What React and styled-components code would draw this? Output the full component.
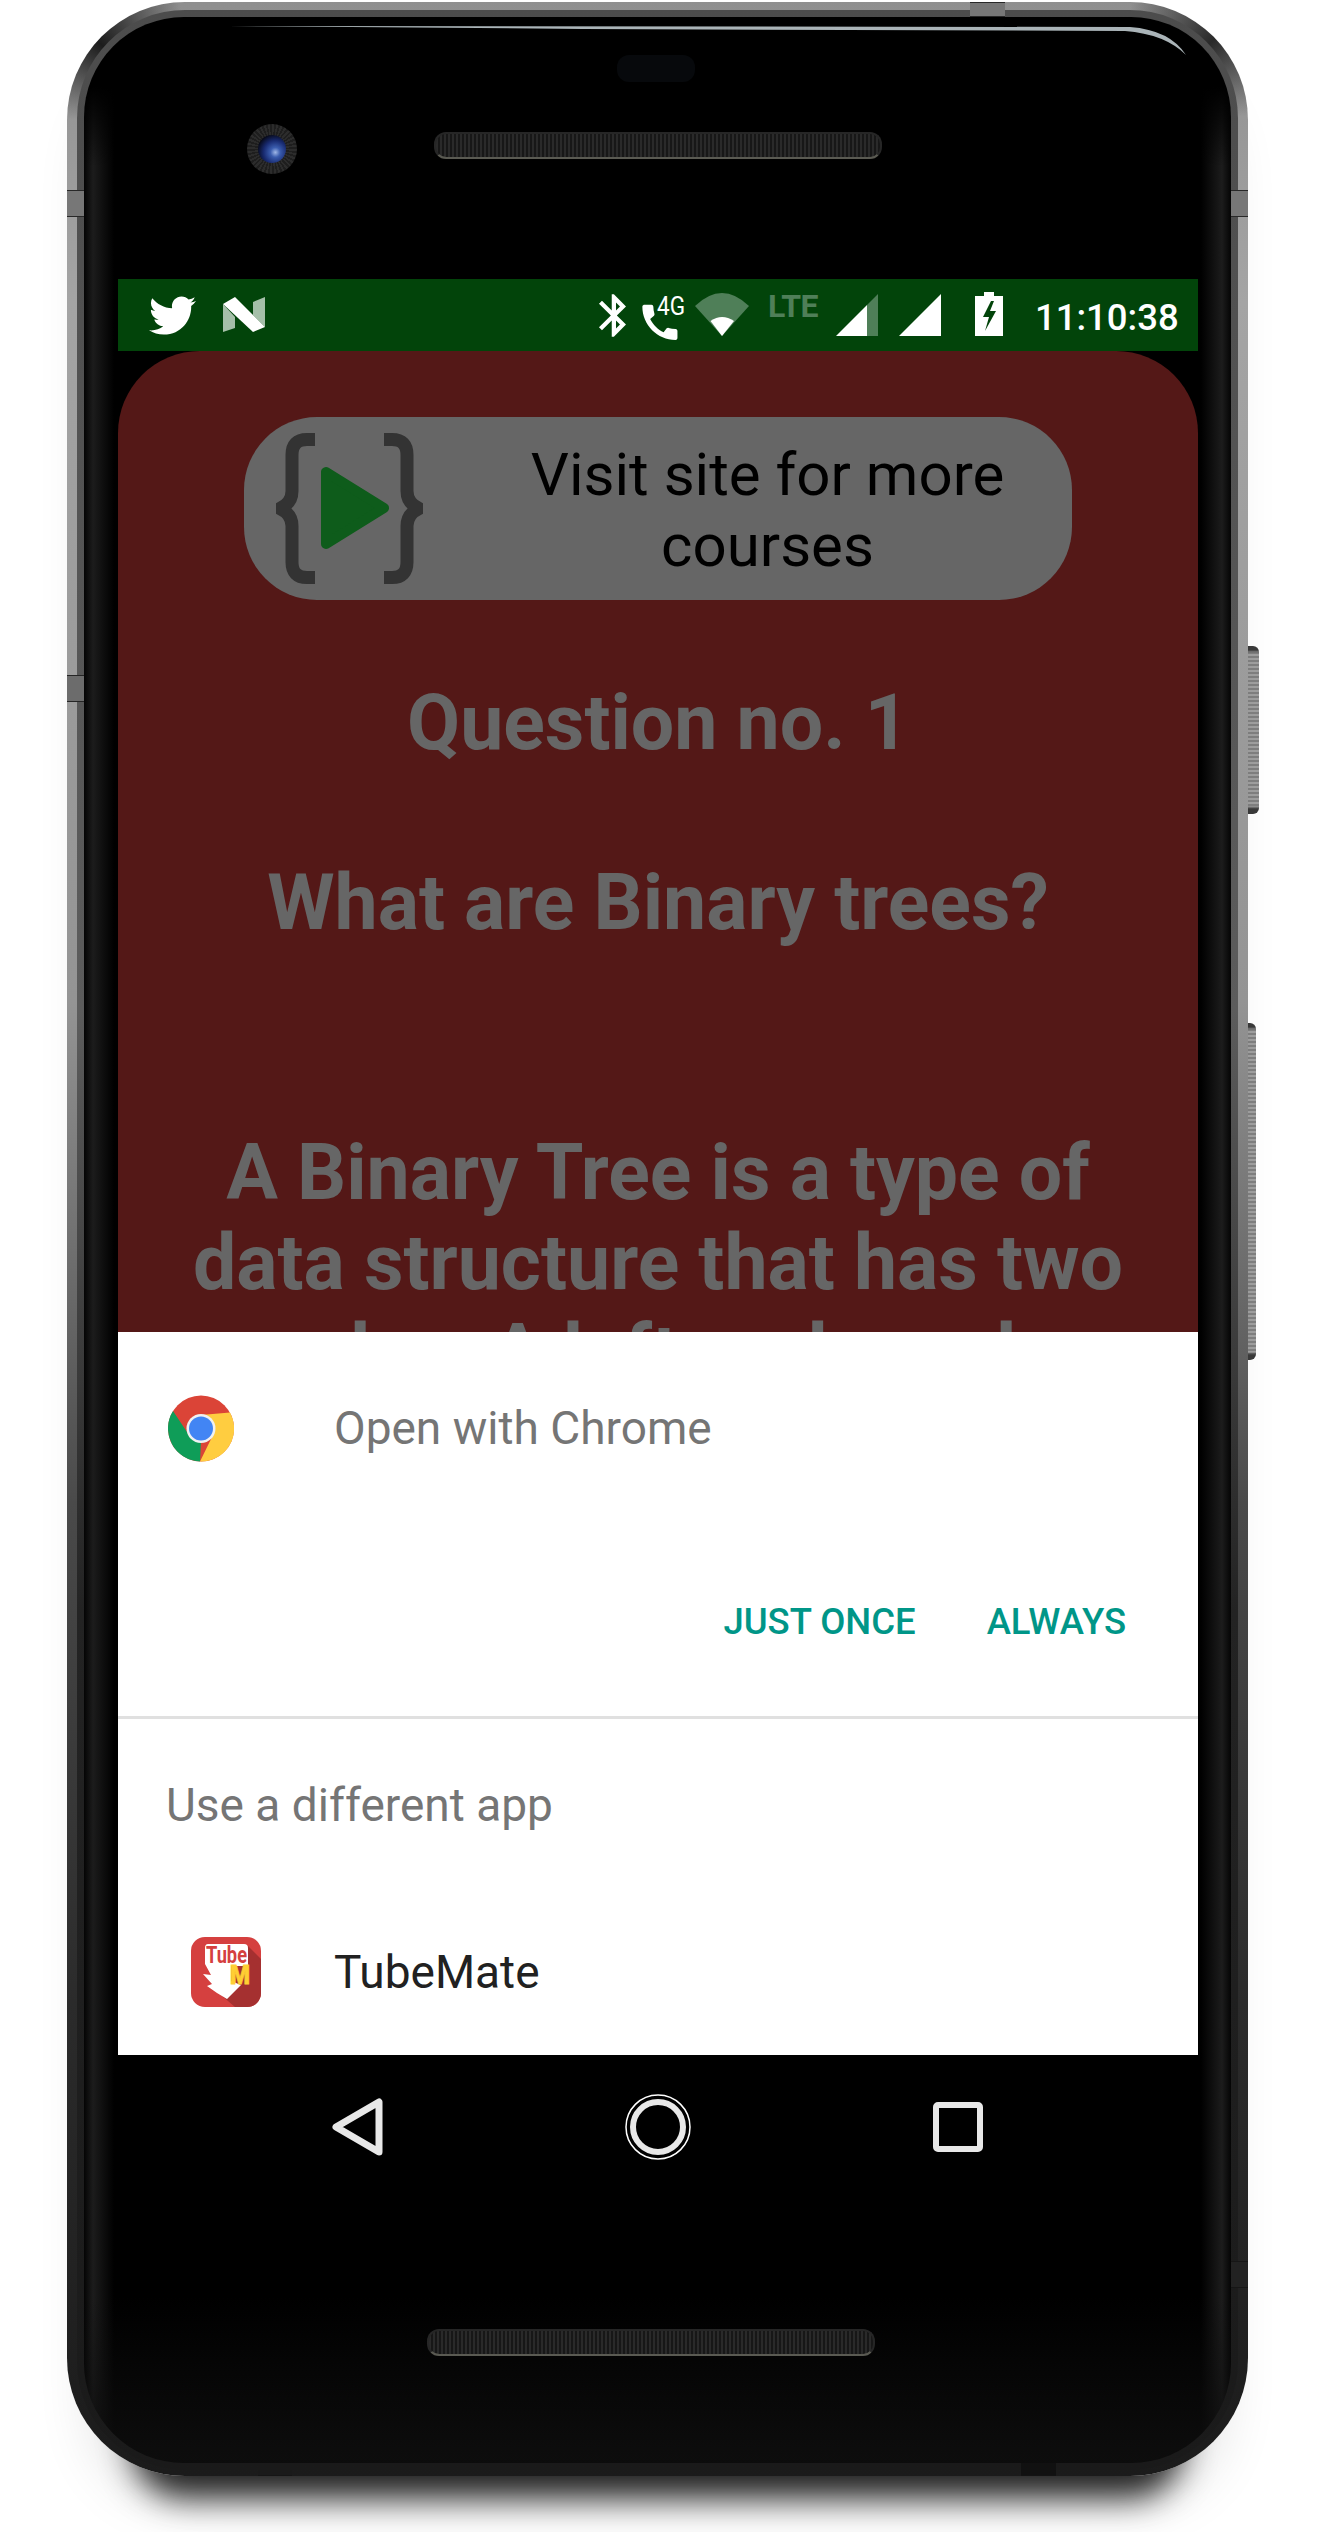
import React from 'react'
import styled, { createGlobalStyle } from 'styled-components'
import { FaTwitter } from 'react-icons/fa'

const GlobalStyle = createGlobalStyle`
  html, body {
    margin: 0;
    padding: 0;
    background: #fff;
    font-family: Roboto, "Liberation Sans", sans-serif;
  }
`

const Stage = styled.div`
  position: relative;
  width: 1330px;
  height: 2532px;
  overflow: hidden;
  background: #fff;
`

const SideButton = styled.div`
  position: absolute;
  left: 1246px;
  top: ${(p) => p.$top}px;
  width: ${(p) => p.$width}px;
  height: ${(p) => p.$height}px;
  border-radius: 0 6px 6px 0;
  background:
    linear-gradient(180deg, #3a3a3a 0, #3a3a3a 4px, transparent 7px, transparent calc(100% - 8px), #3a3a3a calc(100% - 5px)),
    repeating-linear-gradient(180deg, #a0a0a0 0, #a0a0a0 2px, #808080 2px, #808080 4px);
`

const Phone = styled.div`
  position: relative;
  box-sizing: border-box;
  width: 1181px;
  height: 2474px;
  margin: 2px 0 0 67px;
  padding: 8px 10px 6px 10px;
  border-radius: 118px;
  background:
    conic-gradient(from 270deg at 118px 118px, transparent 0deg, #1c1c1c 42deg, transparent 88deg, transparent 360deg),
    conic-gradient(from 0deg at calc(100% - 118px) 118px, transparent 0deg, #2a2a2a 46deg, transparent 88deg, transparent 360deg),
    linear-gradient(180deg, #8f8f8f 0, #a4a4a4 300px, #949494 1000px, #4a4a4a 1500px, #2b2b2b 2000px, #1b1b1b 2474px);
  box-shadow: 0 88px 32px -66px rgba(0, 0, 0, 0.85), 0 50px 60px -30px rgba(0, 0, 0, 0.14);
`

const Rim = styled.div`
  box-sizing: border-box;
  height: 100%;
  padding: 7px;
  border-radius: 108px;
  background: linear-gradient(180deg, #4c4c4c 0, #5c5c5c 1000px, #232323 1600px, #1a1a1a 100%);
`

const Bezel = styled.div`
  position: relative;
  box-sizing: border-box;
  height: 100%;
  padding: 0 32px 0 34px;
  border-radius: 100px;
  overflow: hidden;
  background:
    linear-gradient(180deg, #000 70px, transparent 150px, transparent 2280px, rgba(14, 14, 14, 0.9) 2440px),
    linear-gradient(90deg, #040404 0, #1c1c1c 9px, #000 30px, #000 calc(100% - 30px), #1c1c1c calc(100% - 9px), #040404 100%);
`

const Notch = styled.div`
  position: absolute;
  top: ${(p) => p.$top}px;
  left: ${(p) => p.$left}px;
  width: ${(p) => p.$width}px;
  height: ${(p) => p.$height}px;
  box-sizing: border-box;
  background: ${(p) => p.$color};
  border-top: 1px solid rgba(20, 20, 20, 0.8);
  border-bottom: 1px solid rgba(20, 20, 20, 0.8);
`

const Glare = styled.svg`
  position: absolute;
  top: 0;
  left: 0;
  width: 1146px;
  height: 70px;
`

const TopArea = styled.div`
  display: flex;
  flex-direction: column;
  height: 262px;
  padding-top: 38px;
  box-sizing: border-box;
`

const Sensor = styled.div`
  width: 78px;
  height: 27px;
  margin-left: 499px;
  border-radius: 12px;
  background: #07090c;
`

const TopRow = styled.div`
  display: flex;
  align-items: center;
  height: 50px;
  margin: 42px 0 0 129px;
  gap: 137px;
`

const Camera = styled.div`
  display: flex;
  align-items: center;
  justify-content: center;
  width: 50px;
  height: 50px;
  border-radius: 50%;
  background: repeating-conic-gradient(#2c2c2c 0 5deg, #1e1e1e 5deg 10deg);
`

const Lens = styled.div`
  width: 28px;
  height: 28px;
  border-radius: 50%;
  background: radial-gradient(circle at 62% 62%, #9fb6e6 0, #3a5cae 20%, #182a70 48%, #05060f 78%);
`

const Speaker = styled.div`
  box-sizing: border-box;
  width: 448px;
  height: 27px;
  margin-bottom: ${(p) => p.$lift || 0}px;
  border-radius: 12px;
  border: 2px solid #262626;
  border-bottom-color: #5a5a52;
  background: repeating-linear-gradient(90deg, #2a2a2a 0, #2a2a2a 2px, #171717 2px, #171717 4px);
`

const Screen = styled.div`
  display: flex;
  flex-direction: column;
  width: 1080px;
  height: 1776px;
`

const StatusBar = styled.div`
  display: flex;
  align-items: center;
  flex: none;
  height: 72px;
  padding-left: 31px;
  background: #02440a;
  color: #fff;
`

const TwitterIcon = styled(FaTwitter)`
  width: 47px;
  height: 47px;
  flex: none;
`

const StatusSvg = styled.svg`
  flex: none;
  margin-left: ${(p) => p.$gap || 0}px;
  margin-bottom: ${(p) => p.$lift || 0}px;
  overflow: visible;
`

const LteLabel = styled.span`
  flex: none;
  width: 52px;
  margin-left: 19px;
  margin-bottom: 19px;
  font-size: 32px;
  line-height: 26px;
  font-weight: 700;
  letter-spacing: -0.5px;
  color: #4f7f58;
`

const Clock = styled.span`
  flex: none;
  margin-left: 32px;
  margin-top: 5px;
  font-size: 36.5px;
  line-height: 42px;
  font-weight: 500;
  color: #fff;
`

const Sheet = styled.div`
  display: flex;
  flex-direction: column;
  align-items: center;
  flex: none;
  height: 981px;
  overflow: hidden;
  border-radius: 82px 82px 0 0;
  background: #541817;
`

const Banner = styled.div`
  display: flex;
  align-items: center;
  flex: none;
  box-sizing: border-box;
  width: 828px;
  height: 183px;
  margin-top: 66px;
  padding-left: 32px;
  border-radius: 73px;
  background: #666;
`

const BannerText = styled.div`
  flex: 1;
  margin: 2px 0 0 40px;
  font-size: 60px;
  line-height: 71px;
  text-align: center;
  color: #000;
`

const Heading = styled.div`
  flex: none;
  width: 1020px;
  margin-top: ${(p) => p.$top}px;
  font-size: 77px;
  line-height: 90px;
  font-weight: 700;
  text-align: center;
  color: #666;
`

const Dialog = styled.div`
  display: flex;
  flex-direction: column;
  flex: 1;
  overflow: hidden;
  background: #fff;
`

const AppRow = styled.div`
  display: flex;
  align-items: center;
  flex: none;
  height: ${(p) => p.$height}px;
  padding-left: ${(p) => p.$pad}px;
  gap: ${(p) => p.$gap}px;
`

const AppLabel = styled.span`
  font-size: 46px;
  color: ${(p) => p.$color};
`

const Actions = styled.div`
  display: flex;
  align-items: center;
  justify-content: flex-end;
  box-sizing: border-box;
  flex: none;
  height: 192px;
  padding: 2px 72px 0 0;
  gap: 71px;
`

const ActionButton = styled.span`
  font-size: 36.5px;
  font-weight: 500;
  color: #009688;
`

const Divider = styled.div`
  flex: none;
  height: 3px;
  background: #e0e0e0;
`

const SectionLabel = styled.div`
  display: flex;
  align-items: center;
  flex: none;
  height: 172px;
  padding-left: 48px;
  font-size: 46px;
  color: #757575;
`

const NavBar = styled.div`
  display: flex;
  justify-content: center;
  flex: none;
  width: 1080px;
  height: 144px;
`

const NavCell = styled.div`
  display: flex;
  align-items: center;
  justify-content: center;
  width: 300px;
`

const BottomArea = styled.div`
  padding: 130px 0 0 309px;
`

function BraceLogo () {
  return (
    <svg width='147' height='151' viewBox='0 0 147 151' style={{ flex: 'none' }}>
      <g fill='none' stroke='#333' strokeWidth='13'>
        <path d='M39 6.5H31Q16 6.5 16 22V58Q16 70 4 75.5Q16 81 16 93V129Q16 144.5 31 144.5H39' />
        <path d='M108 6.5H116Q131 6.5 131 22V58Q131 70 143 75.5Q131 81 131 93V129Q131 144.5 116 144.5H108' />
      </g>
      <path d='M50 39V111L108 75Z' fill='#0e5c1b' stroke='#0e5c1b' strokeWidth='10' strokeLinejoin='round' />
    </svg>
  )
}

function ChromeIcon () {
  return (
    <svg width='66' height='67' viewBox='0 0 66 67' style={{ flex: 'none' }}>
      <circle cx='33' cy='33.5' r='33' fill='#db4437' />
      <path d='M5 16L21 40L33 46L32 66.5A33 33 0 0 1 5 16Z' fill='#0f9d58' />
      <path d='M62 17.5L33 20L45 40L32 66.5A33 33 0 0 0 62 17.5Z' fill='#ffcd40' />
      <circle cx='33' cy='33.5' r='14.5' fill='#f1f1f1' />
      <circle cx='33' cy='33.5' r='12' fill='#4285f4' />
    </svg>
  )
}

function TubeMateIcon () {
  return (
    <svg width='70' height='70' viewBox='0 0 70 70' style={{ flex: 'none' }}>
      <defs>
        <clipPath id='tubeClip'>
          <rect width='70' height='70' rx='14' />
        </clipPath>
      </defs>
      <g clipPath='url(#tubeClip)'>
        <rect width='70' height='70' fill='#d5403f' />
        <path d='M57 9L70 22V70H44L30 58Z' fill='#a53030' />
        <path d='M17 7H53Q57 7 57 11V29H40V44L50 48L36 62L26 56L16 49L21 47L12 37L20 38L14 27V11Q14 7 17 7Z' fill='#fff' />
        <text x='15' y='26' fontFamily='Roboto, sans-serif' fontWeight='700' fontSize='24' fill='#d5403f' textLength='41' lengthAdjust='spacingAndGlyphs'>Tube</text>
        <text x='39' y='47' fontFamily='Roboto, sans-serif' fontWeight='900' fontSize='25' fill='#ffcf33' stroke='#ffcf33' strokeWidth='0.8' textLength='20' lengthAdjust='spacingAndGlyphs'>M</text>
      </g>
    </svg>
  )
}

export default function App () {
  return (
    <Stage>
      <GlobalStyle />
      <SideButton $top={646} $width={13} $height={168} />
      <SideButton $top={1023} $width={10} $height={337} />
      <Phone>
        <Notch $top={188} $left={0} $width={17} $height={27} $color='#777' />
        <Notch $top={673} $left={0} $width={17} $height={27} $color='#6c6c6c' />
        <Notch $top={188} $left={1163} $width={18} $height={27} $color='#777' />
        <Notch $top={0} $left={903} $width={35} $height={15} $color='#777' />
        <Notch $top={2259} $left={1163} $width={18} $height={27} $color='#222' />
        <Notch $top={2459} $left={191} $width={34} $height={15} $color='#1a1a1a' />
        <Notch $top={2459} $left={954} $width={35} $height={15} $color='#111' />
        <Rim>
          <Bezel>
            <Glare viewBox='0 0 1146 70'>
              <path d='M145 9L1046 10Q1086 13 1102 38Q1081 17 1041 14L500 12Z' fill='#aab4b8' />
            </Glare>
            <TopArea>
              <Sensor />
              <TopRow>
                <Camera><Lens /></Camera>
                <Speaker $lift={8} />
              </TopRow>
            </TopArea>
            <Screen>
              <StatusBar>
                <TwitterIcon />
                <StatusSvg $gap={27} width='42' height='36' viewBox='0 0 42 36'>
                  <path d='M0 7L12 20V31L0 35ZM30 5L42 0V30L30 18Z' fill='#a5bfa9' />
                  <path d='M0 7L12 0L42 30L30 35Z' fill='#fff' />
                </StatusSvg>
                <StatusSvg $gap={334} width='27' height='43' viewBox='5 2 12.71 20'>
                  <path fill='#fff' d='M17.71 7.71L12 2h-1v7.59L6.41 5 5 6.41 10.59 12 5 17.59 6.41 19 11 14.41V22h1l5.71-5.71-4.3-4.29 4.3-4.29zM13 5.83l1.88 1.88L13 9.59V5.83zm1.88 10.46L13 18.17v-3.76l1.88 1.88z' />
                </StatusSvg>
                <StatusSvg $gap={14} width='45' height='42' viewBox='0 0 45 42'>
                  <path fill='#fff' transform='translate(-3.5 5) scale(1.95)' d='M20.01 15.38c-1.23 0-2.42-.2-3.53-.56-.35-.12-.74-.03-1.01.24l-1.57 1.97c-2.83-1.35-5.48-3.9-6.89-6.83l1.95-1.66c.27-.28.35-.67.24-1.02-.37-1.11-.56-2.3-.56-3.53 0-.54-.45-.99-.99-.99H4.19C3.65 3 3 3.24 3 3.99 3 13.28 10.73 21 20.01 21c.71 0 .99-.63.99-1.18v-3.45c0-.54-.45-.99-.99-.99z' />
                  <text x='17' y='21' fill='#fff' fontFamily='Roboto, sans-serif' fontSize='26' textLength='28' lengthAdjust='spacingAndGlyphs'>4G</text>
                </StatusSvg>
                <StatusSvg $gap={10} $lift={2} width='54' height='43' viewBox='0 0 54 43'>
                  <path d='M0 13Q27 -13 54 13L27 43Z' fill='#4f7f58' />
                  <path d='M15.5 28Q27 20 39 28L27 43Z' fill='#fff' />
                </StatusSvg>
                <LteLabel>LTE</LteLabel>
                <StatusSvg $gap={16} width='42' height='42' viewBox='0 0 42 42'>
                  <path d='M31 11L42 0V42H31Z' fill='#4f7f58' />
                  <path d='M0 42L31 11V42Z' fill='#fff' />
                </StatusSvg>
                <StatusSvg $gap={21} width='42' height='42' viewBox='0 0 42 42'>
                  <path d='M0 42L42 0V42Z' fill='#fff' />
                </StatusSvg>
                <StatusSvg $gap={34} $lift={2} width='28' height='44' viewBox='0 0 28 44'>
                  <path d='M9 0H19V4H28V44H0V4H9Z' fill='#fff' />
                  <path d='M16 9L8 25H14L10 39L21 19H15L19 9Z' fill='#02440a' />
                </StatusSvg>
                <Clock>11:10:38</Clock>
              </StatusBar>
              <Sheet>
                <Banner>
                  <BraceLogo />
                  <BannerText>Visit site for more courses</BannerText>
                </Banner>
                <Heading $top={78}>Question no. 1</Heading>
                <Heading $top={90}>What are Binary trees?</Heading>
                <Heading $top={180}>A Binary Tree is a type of data structure that has two nodes: A left node and a</Heading>
              </Sheet>
              <Dialog>
                <AppRow $height={192} $pad={50} $gap={100}>
                  <ChromeIcon />
                  <AppLabel $color='#757575'>Open with Chrome</AppLabel>
                </AppRow>
                <Actions>
                  <ActionButton>JUST ONCE</ActionButton>
                  <ActionButton>ALWAYS</ActionButton>
                </Actions>
                <Divider />
                <SectionLabel>Use a different app</SectionLabel>
                <AppRow $height={162} $pad={73} $gap={73}>
                  <TubeMateIcon />
                  <AppLabel $color='#212121'>TubeMate</AppLabel>
                </AppRow>
              </Dialog>
            </Screen>
            <NavBar>
              <NavCell>
                <svg width='52' height='58' viewBox='0 0 52 58'>
                  <path d='M47 4V54L4 29Z' fill='none' stroke='#e8e8e8' strokeWidth='7' strokeLinejoin='round' />
                </svg>
              </NavCell>
              <NavCell>
                <svg width='66' height='66' viewBox='0 0 66 66'>
                  <circle cx='33' cy='33' r='32' fill='none' stroke='#fff' strokeWidth='1.5' />
                  <circle cx='33' cy='33' r='25' fill='none' stroke='#e8e8e8' strokeWidth='6' />
                </svg>
              </NavCell>
              <NavCell>
                <svg width='50' height='50' viewBox='0 0 50 50'>
                  <rect x='3' y='3' width='44' height='44' rx='2' fill='none' stroke='#e8e8e8' strokeWidth='6' />
                </svg>
              </NavCell>
            </NavBar>
            <BottomArea>
              <Speaker />
            </BottomArea>
          </Bezel>
        </Rim>
      </Phone>
    </Stage>
  )
}
